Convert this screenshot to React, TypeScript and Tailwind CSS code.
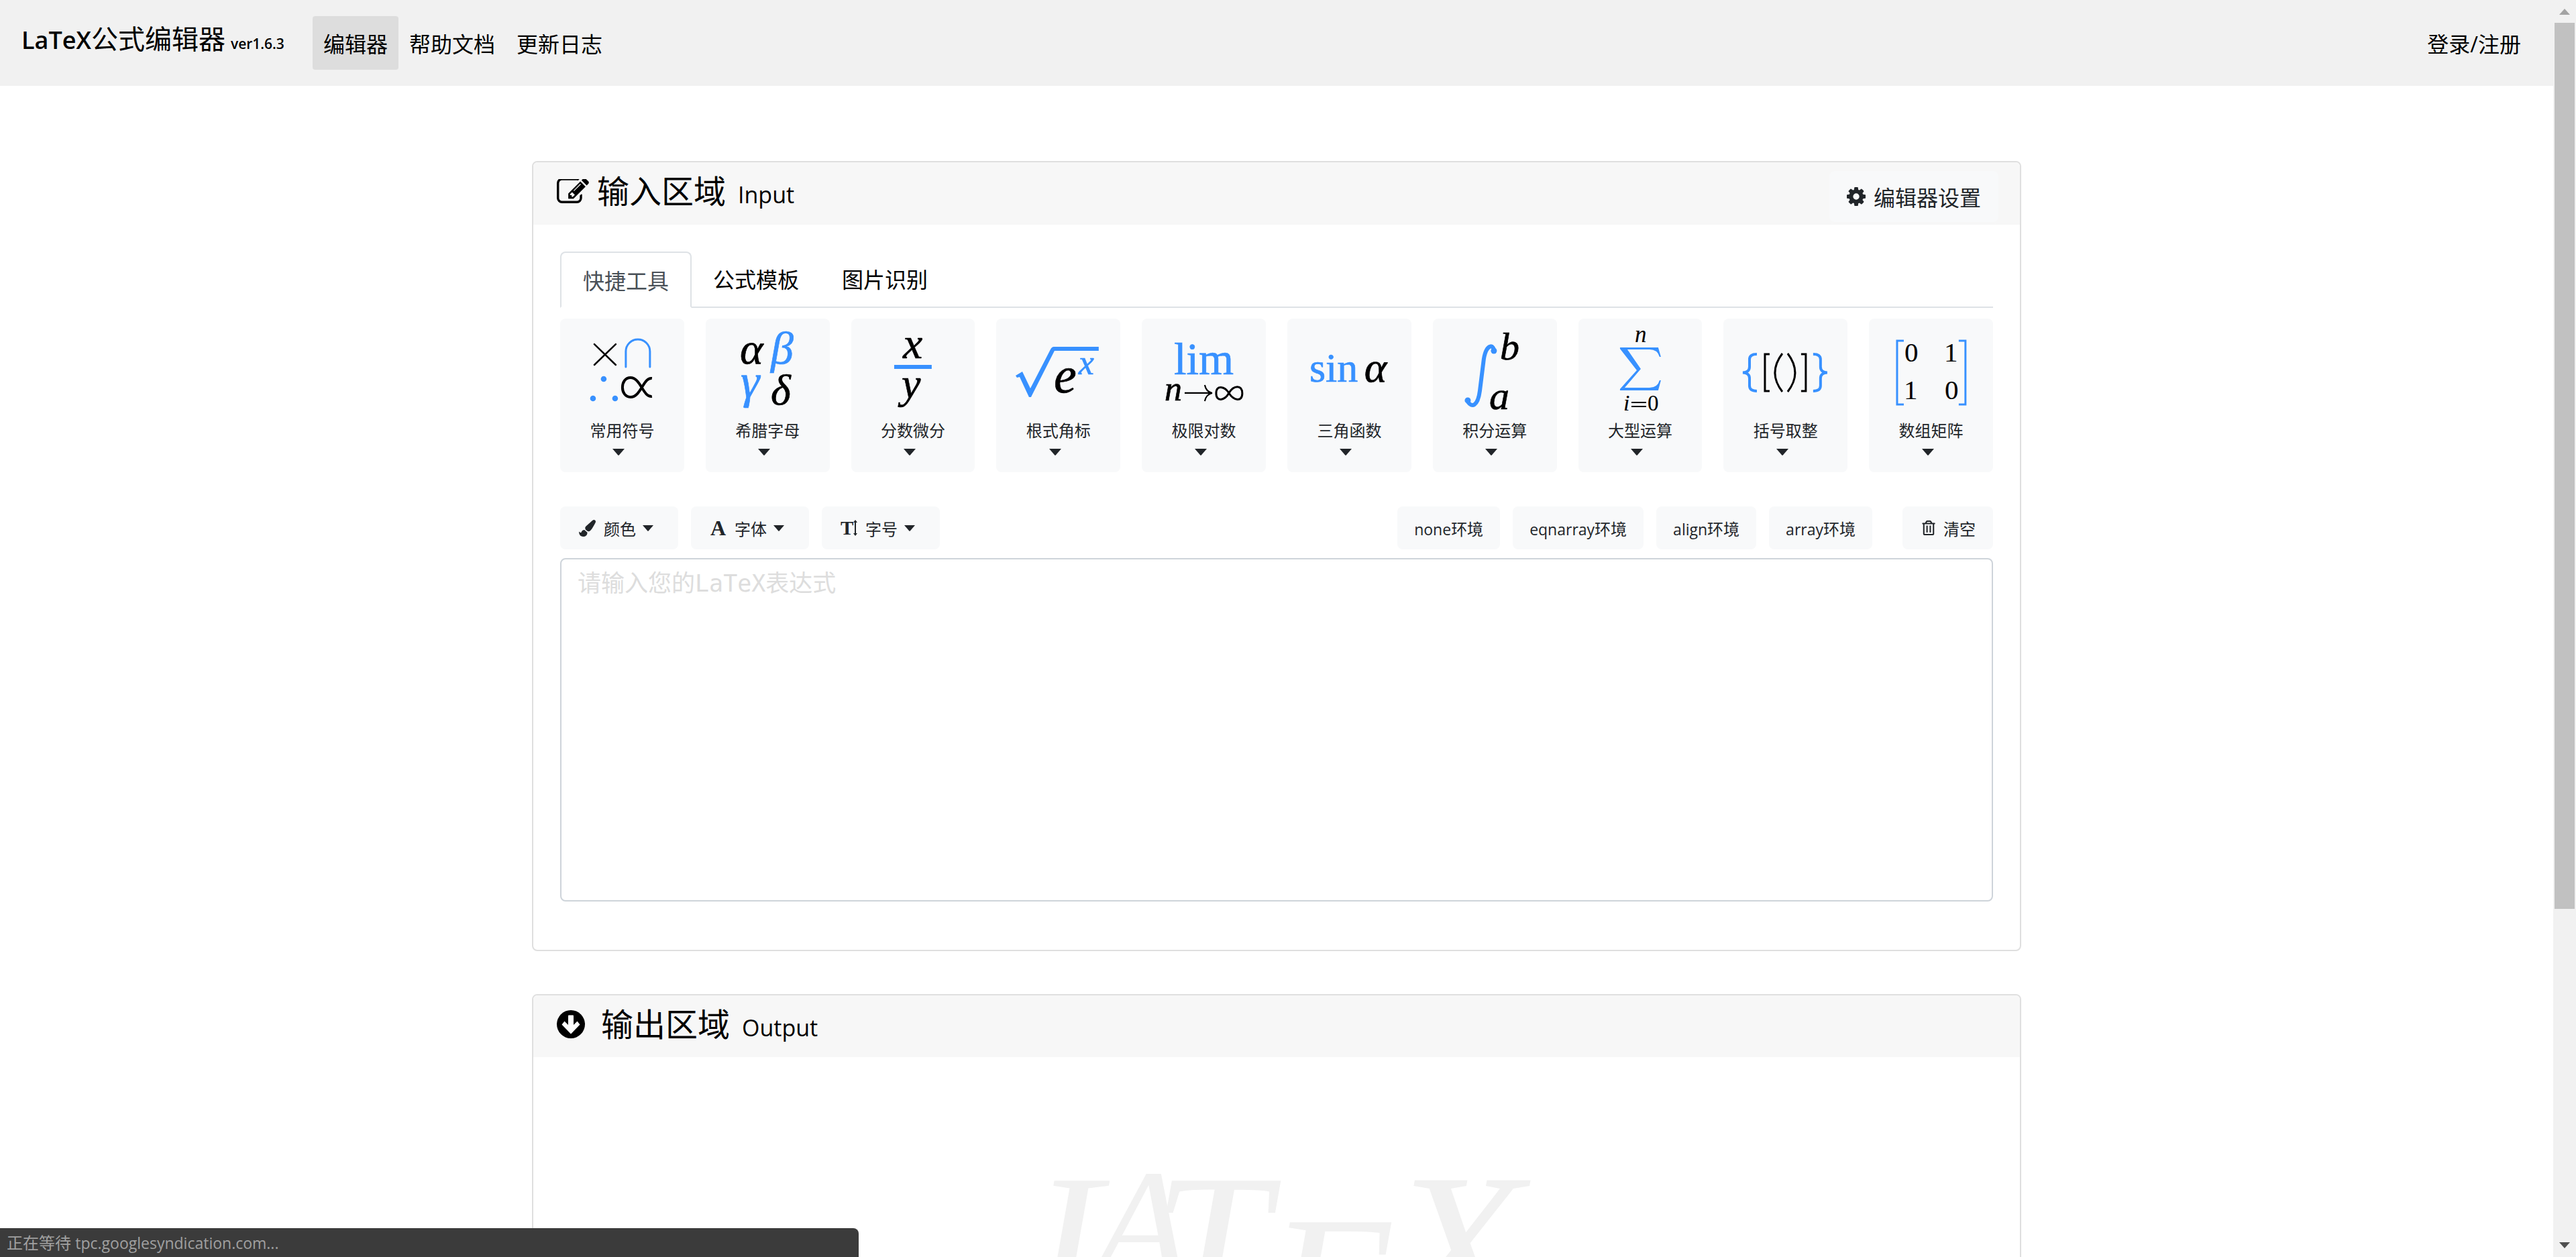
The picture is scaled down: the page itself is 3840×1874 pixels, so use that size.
import React from "react";
import { FaPaintBrush, FaRegTrashAlt } from "react-icons/fa";

const BLUE = "#3891ff";
const SERIF = "'Liberation Serif', serif";

function EditIcon() {
  return (
    <svg viewBox="0 200 1792 1400" className="h-[38px] w-12 shrink-0" fill="currentColor" aria-hidden="true">
      <path d="M888 1184l116-116-152-152-116 116v56h96v96h56zm440-720q-16-16-33 1l-350 350q-17 17-1 33t33-1l350-350q17-17 1-33zm80 594v190q0 119-84.500 203.500t-203.500 84.500h-832q-119 0-203.500-84.500t-84.500-203.500v-832q0-119 84.500-203.500t203.500-84.500h832q63 0 117 25 15 7 18 23 3 17-9 29l-49 49q-14 14-32 8-23-6-45-6h-832q-66 0-113 47t-47 113v832q0 66 47 113t113 47h832q66 0 113-47t47-113v-126q0-13 9-22l64-64q15-15 35-7t20 29zm-96-738l288 288-672 672h-288v-288zm444 132l-92 92-288-288 92-92q28-28 68-28t68 28l152 152q28 28 28 68t-28 68z" />
    </svg>
  );
}

function GearIcon() {
  return (
    <svg viewBox="128 128 1536 1536" className="size-7 shrink-0" fill="currentColor" aria-hidden="true">
      <path d="M1152 896q0-106-75-181t-181-75-181 75-75 181 75 181 181 75 181-75 75-181zm512-109v222q0 12-8 23t-20 13l-185 28q-19 54-39 91 35 50 107 138 10 12 10 25t-9 23q-27 37-99 108t-94 71q-12 0-26-9l-138-108q-44 23-91 38-16 136-29 186-7 28-36 28h-222q-14 0-24.500-8.500t-11.500-21.500l-28-184q-49-16-90-37l-141 107q-10 9-25 9-14 0-25-11-126-114-165-168-7-10-7-23 0-12 8-23 15-21 51-66.500t54-70.500q-27-50-41-99l-183-27q-13-2-21-12.500t-8-23.500v-222q0-12 8-23t19-13l186-28q14-46 39-92-40-57-107-138-10-12-10-24 0-10 9-23 26-36 98.500-107.500t94.500-71.500q13 0 26 10l138 107q44-23 91-38 16-136 29-186 7-28 36-28h222q14 0 24.500 8.500t11.500 21.500l28 184q49 16 90 37l142-107q9-9 24-9 13 0 25 10 129 119 165 170 7 8 7 22 0 12-8 23-15 21-51 66.500t-54 70.500q26 50 41 98l183 28q13 2 21 12.500t8 23.500z" />
    </svg>
  );
}

function ArrowDownCircle() {
  return (
    <svg viewBox="0 0 42 42" className="size-[42px] shrink-0" aria-hidden="true">
      <circle cx="21" cy="21" r="21" fill="#000" />
      <path d="M18 7.500h6q1 0 1 1v13.500l5.500-5.500 4 5L21 35.500 7.500 21.500l4-5L17 22V8.500q0-1 1-1z" fill="#fff" />
    </svg>
  );
}

function Caret({ big = false }: { big?: boolean }) {
  return (
    <svg viewBox="0 0 18 10" className={big ? "mr-[10px] h-[10px] w-[18px]" : "h-[9px] w-4"} fill="currentColor" aria-hidden="true">
      <path d="M0 0h18L9.800 9.500q-.8.800-1.600 0z" />
    </svg>
  );
}

function Glyph({ x, y, size, blue, upright, children }: { x: number; y: number; size: number; blue?: boolean; upright?: boolean; children: React.ReactNode }) {
  const color = blue ? BLUE : "#000";
  return (
    <text x={x} y={y} fontSize={size} fontFamily={SERIF} fontStyle={upright ? "normal" : "italic"} fill={color} stroke={color} strokeWidth={size > 45 ? "0.7" : "0.1"}>
      {children}
    </text>
  );
}

const tools: { label: string; art: React.ReactNode }[] = [
  {
    label: "常用符号",
    art: (
      <>
        <path d="M51 38L83 69M83 38L51 69" stroke="#000" strokeWidth="2.500" strokeLinecap="round" />
        <path d="M98 72V49a18 18 0 0 1 36 0V72" stroke={BLUE} strokeWidth="3" fill="none" strokeLinecap="round" />
        <circle cx="65" cy="90" r="4.300" fill={BLUE} />
        <circle cx="49" cy="119" r="4.300" fill={BLUE} />
        <circle cx="82" cy="119" r="4.300" fill={BLUE} />
        <path d="M137 89C124 87 121 117 105 117C89 117 89 88 105 88C120 88 124 118 137 116" stroke="#000" strokeWidth="4" fill="none" />
      </>
    ),
  },
  {
    label: "希腊字母",
    art: (
      <>
        <Glyph x={51} y={67} size={66}>α</Glyph>
        <Glyph x={97} y={67} size={68} blue>β</Glyph>
        <Glyph x={52} y={118} size={72} blue>γ</Glyph>
        <Glyph x={97} y={128} size={64}>δ</Glyph>
      </>
    ),
  },
  {
    label: "分数微分",
    art: (
      <>
        <Glyph x={77} y={59} size={66}>x</Glyph>
        <path d="M64 69h56v6H64z" fill={BLUE} />
        <Glyph x={75} y={118} size={64}>y</Glyph>
      </>
    ),
  },
  {
    label: "根式角标",
    art: (
      <>
        <path d="M29 85l10-6 12 25 30-58q2-4 5-4h67v6H87L52 117h-3L35 87l-4 1z" fill={BLUE} />
        <Glyph x={86} y={110} size={76}>e</Glyph>
        <Glyph x={123} y={83} size={52} blue>x</Glyph>
      </>
    ),
  },
  {
    label: "极限对数",
    art: (
      <>
        <Glyph x={48} y={83} size={67} blue upright>lim</Glyph>
        <Glyph x={34} y={122} size={52}>n</Glyph>
        <path d="M64 111h40M94 99q2 10 11 12q-9 2-11 12" stroke="#000" strokeWidth="2.200" fill="none" />
        <path d="M130 111C124 101 111 98 111 111.500C111 125 124 122 130 111C137 99 150 98 150 111.500C150 125 137 122 130 111" stroke="#000" strokeWidth="3" fill="none" />
      </>
    ),
  },
  {
    label: "三角函数",
    art: (
      <>
        <Glyph x={33} y={94} size={62} blue upright>sin</Glyph>
        <Glyph x={115} y={94} size={64}>α</Glyph>
      </>
    ),
  },
  {
    label: "积分运算",
    art: (
      <>
        <path d="M91 50C92 38 80 36 76 60L70 108C67 131 58 133 52 124" stroke={BLUE} strokeWidth="6" fill="none" />
        <circle cx="91" cy="48" r="4.500" fill={BLUE} />
        <circle cx="52" cy="122" r="4.500" fill={BLUE} />
        <Glyph x={100} y={61} size={58}>b</Glyph>
        <Glyph x={84} y={135} size={60}>a</Glyph>
      </>
    ),
  },
  {
    label: "大型运算",
    art: (
      <>
        <Glyph x={84} y={35} size={35}>n</Glyph>
        <path d="M62 43H119L123 57H121Q118 46 106 46H73L93 75L69 103H106Q118 103 121 92H123L119 107H62V105L87 77L62 45z" fill={BLUE} />
        <Glyph x={67} y={137} size={34}>i</Glyph>
        <path d="M79 125h22M79 131h22" stroke="#000" strokeWidth="2" />
        <Glyph x={103} y={137} size={33} upright>0</Glyph>
      </>
    ),
  },
  {
    label: "括号取整",
    art: (
      <>
        <path d="M50 53Q39 53 39 61V72Q39 80 29 80.500Q39 81 39 89V100Q39 108 50 108" stroke={BLUE} strokeWidth="4" fill="none" />
        <path d="M134 53Q145 53 145 61V72Q145 80 155 80.500Q145 81 145 89V100Q145 108 134 108" stroke={BLUE} strokeWidth="4" fill="none" />
        <path d="M69 53H62V108H69M116 53H123V108H116M88 52Q66 81 88 109M96 52Q118 81 96 109" stroke="#000" strokeWidth="3" fill="none" />
      </>
    ),
  },
  {
    label: "数组矩阵",
    art: (
      <>
        <path d="M52 33H42V128H52M134 33H144V128H134" stroke={BLUE} strokeWidth="3" fill="none" />
        <Glyph x={53} y={64} size={41} upright>0</Glyph>
        <Glyph x={112} y={64} size={41} upright>1</Glyph>
        <Glyph x={52} y={120} size={41} upright>1</Glyph>
        <Glyph x={113} y={120} size={41} upright>0</Glyph>
      </>
    ),
  },
];

const formats = [
  { label: "颜色", icon: <FaPaintBrush className="size-[25px]" aria-hidden="true" /> },
  {
    label: "字体",
    icon: (
      <span className="w-[25px] text-center font-['Liberation_Serif',serif] text-[32px] leading-9 font-bold" aria-hidden="true">A</span>
    ),
  },
  {
    label: "字号",
    icon: (
      <span className="flex w-[25px] items-center font-['Liberation_Serif',serif] text-[29px] leading-9 font-bold" aria-hidden="true">
        T
        <svg viewBox="0 0 6 24" className="h-6 w-[6px] shrink-0">
          <path d="M3 0l3 4H4v16h2l-3 4-3-4h2V4H0z" fill="currentColor" />
        </svg>
      </span>
    ),
  },
];

const environments = ["none", "eqnarray", "align", "array"];

function Navbar() {
  return (
    <header className="flex h-32 items-center bg-[#f1f1f1] px-8 text-[32px] leading-[48px] text-black">
      <a href="#" className="mr-[42px] flex items-baseline gap-2 pb-[6px] font-semibold">
        <span className="text-[36px]">LaTeX<span className="text-[40px] font-normal">公式编辑器</span></span>
        <span className="text-[21px]">ver1.6.3</span>
      </a>
      <nav className="flex flex-1">
        <a href="#" className="rounded-sm bg-[#dddddd] px-4 pt-[18px] pb-[14px]" aria-current="page">编辑器</a>
        <a href="#" className="px-4 pt-[18px] pb-[14px]">帮助文档</a>
        <a href="#" className="px-4 pt-[18px] pb-[14px]">更新日志</a>
        <a href="#" className="ml-auto px-4 pt-[18px] pb-[14px]">登录/注册</a>
      </nav>
    </header>
  );
}

function InputCard() {
  return (
    <section className="rounded-lg border-2 border-[#dfdfdf] bg-white">
      <div className="flex h-[93px] items-center justify-between rounded-t-md bg-[#f7f7f7] pr-8 pl-[35px]">
        <h2 className="flex items-center gap-3 pb-[6px] text-black">
          <EditIcon />
          <span className="flex items-baseline gap-[18px] pt-[6px]">
            <span className="text-5xl">输入区域</span>
            <span className="text-[34px]">Input</span>
          </span>
        </h2>
        <button type="button" className="mt-2 flex h-[76px] items-center gap-3 rounded-lg bg-[#f8f9fa] px-[26px] text-[32px]">
          <GearIcon />
          <span className="pt-1">编辑器设置</span>
        </button>
      </div>
      <div className="px-10 pt-10 pb-[72px]">
        <div role="tablist" className="flex h-[84px] border-b-2 border-[#dee2e6] text-[32px] text-black">
          <button type="button" role="tab" aria-selected="true" className="-mb-[2px] rounded-t-lg border-2 border-[#dee2e6] border-b-white bg-white px-8 pt-1 text-[#495057]">快捷工具</button>
          <button type="button" role="tab" aria-selected="false" className="px-8 pt-[2px]">公式模板</button>
          <button type="button" role="tab" aria-selected="false" className="px-8 pt-[2px]">图片识别</button>
        </div>
        <div className="mt-4 grid grid-cols-10 gap-8">
          {tools.map((tool) => (
            <button key={tool.label} type="button" className="flex h-[229px] flex-col items-center rounded-lg bg-[#f8f9fa] text-2xl">
              <svg viewBox="0 0 185 144" className="h-36 w-full overflow-visible" aria-hidden="true">{tool.art}</svg>
              <span className="mt-1 mb-2 leading-[38px]">{tool.label}</span>
              <Caret big />
            </button>
          ))}
        </div>
        <div className="mt-[51px] flex items-center text-2xl">
          <div className="flex gap-[19px]">
            {formats.map((f) => (
              <button key={f.label} type="button" className="flex h-16 w-44 items-center rounded-lg bg-[#f8f9fa] pl-7">
                {f.icon}
                <span className="mr-[10px] ml-3 pt-1">{f.label}</span>
                <Caret />
              </button>
            ))}
          </div>
          <div className="ml-auto flex gap-[19px]">
            {environments.map((e) => (
              <button key={e} type="button" className="h-16 rounded-lg bg-[#f8f9fa] px-[25px] pt-1 text-[23px]">
                {e}<span className="text-2xl">环境</span>
              </button>
            ))}
          </div>
          <button type="button" className="ml-[45px] flex h-16 items-center gap-3 rounded-lg bg-[#f8f9fa] pr-[26px] pl-[29px]">
            <FaRegTrashAlt className="h-[22px] w-5" aria-hidden="true" />
            <span className="pt-1">清空</span>
          </button>
        </div>
        <textarea
          aria-label="LaTeX表达式"
          placeholder="请输入您的LaTeX表达式"
          className="mt-[13px] block h-[512px] w-full resize-none rounded-lg border-2 border-[#ced4da] px-6 py-[10px] font-['DejaVu_Sans_Mono','Noto_Sans_CJK_SC',monospace] text-[35px] leading-[52px] placeholder:text-[#dddddd]"
        />
      </div>
    </section>
  );
}

function OutputCard() {
  return (
    <section className="mt-16 rounded-lg border-2 border-[#dfdfdf] bg-white">
      <h2 className="flex h-[92px] items-center gap-6 rounded-t-md bg-[#f7f7f7] pb-[6px] pl-[35px] text-black">
        <ArrowDownCircle />
        <span className="flex items-baseline gap-[18px] pt-[6px]">
          <span className="text-5xl">输出区域</span>
          <span className="text-[34px]">Output</span>
        </span>
      </h2>
      <div className="flex justify-center px-10 pt-[164px] pb-40">
        <svg viewBox="0 0 760 300" className="h-[300px] w-[760px] overflow-visible" fill="#f1f1f1" fontFamily={SERIF} fontStyle="italic" role="img" aria-label="LaTeX">
          <text x="18" y="214" fontSize="296">L</text>
          <text x="106" y="166" fontSize="236">A</text>
          <text x="195" y="224" fontSize="311">T</text>
          <text x="368" y="284" fontSize="308">E</text>
          <text x="549" y="233" fontSize="326">X</text>
        </svg>
      </div>
    </section>
  );
}

function Scrollbar() {
  return (
    <div className="flex h-full w-[34px] shrink-0 flex-col items-center bg-[#f1f1f1]" aria-hidden="true">
      <svg viewBox="0 0 34 34" className="h-[34px] w-[34px] shrink-0"><path d="M17 13l8 9H9z" fill="#a3a3a3" /></svg>
      <div className="h-[70.5%] w-[30px] bg-[#c1c1c1]" />
      <svg viewBox="0 0 34 34" className="mt-auto h-[34px] w-[34px] shrink-0"><path d="M17 21l8-9H9z" fill="#505050" /></svg>
    </div>
  );
}

export default function App() {
  return (
    <div className="flex h-screen overflow-hidden bg-white font-['Open_Sans','Noto_Sans_CJK_SC',sans-serif] text-[#212529]">
      <div className="h-full flex-1 overflow-hidden">
        <Navbar />
        <main className="mx-auto max-w-[2220px] pt-28">
          <InputCard />
          <OutputCard />
        </main>
      </div>
      <Scrollbar />
      <div className="fixed bottom-0 left-0 flex h-[43px] w-1/3 items-center rounded-tr-lg bg-[#3b3b3b] pl-[10px] text-2xl text-[#a0a0a0]">
        <span>正在等待 <span className="text-[23px]">tpc.googlesyndication.com...</span></span>
      </div>
    </div>
  );
}
